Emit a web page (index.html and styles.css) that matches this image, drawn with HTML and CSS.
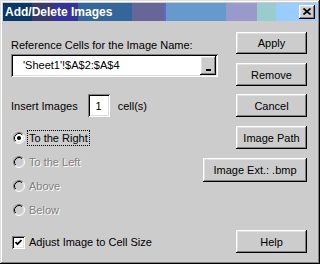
FILE: index.html
```html
<!DOCTYPE html>
<html lang="en">
<head>
    <meta charset="UTF-8">
    <title>Add/Delete Images</title>
    <link rel="stylesheet" href="styles.css">
</head>
<body>
    <div class="window">
        <div class="titlebar">
            <span class="title">Add/Delete Images</span>
            <button class="close-btn" aria-label="Close">
                <svg width="8" height="7" viewBox="0 0 8 7"><path d="M0.5 0.5 L7.5 6.5 M7.5 0.5 L0.5 6.5" stroke="#000" stroke-width="1.7"/></svg>
            </button>
        </div>

        <div class="content">
            <div class="left">
                <div class="label ref-label">Reference Cells for the Image Name:</div>
                <div class="field ref-field">
                    <span class="field-text">'Sheet1'!$A$2:$A$4</span>
                    <button class="pick-btn"><span class="pick-bar"></span></button>
                </div>

                <div class="insert-row">
                    <span>Insert Images</span>
                    <span class="field count-field">1</span>
                    <span>cell(s)</span>
                </div>

                <div class="radios">
                    <div class="radio-row">
                        <svg class="radio" width="12" height="12" viewBox="0 0 12 12">
                            <circle cx="6" cy="6" r="5" fill="#fff"/>
                            <path d="M2.11 9.89 A5.5 5.5 0 0 1 9.89 2.11" stroke="#808080" fill="none"/>
                            <path d="M9.89 2.11 A5.5 5.5 0 0 1 2.11 9.89" stroke="#fff" fill="none"/>
                            <path d="M2.82 9.18 A4.5 4.5 0 0 1 9.18 2.82" stroke="#000" fill="none"/>
                            <path d="M9.18 2.82 A4.5 4.5 0 0 1 2.82 9.18" stroke="#dfdfdf" fill="none"/>
                            <circle cx="6" cy="6" r="2" fill="#000"/>
                        </svg>
                        <span class="focus">To the Right</span>
                    </div>
                    <div class="radio-row disabled">
                        <svg class="radio" width="12" height="12" viewBox="0 0 12 12">
                            <circle cx="6" cy="6" r="5" fill="#ccc"/>
                            <path d="M2.11 9.89 A5.5 5.5 0 0 1 9.89 2.11" stroke="#808080" fill="none"/>
                            <path d="M9.89 2.11 A5.5 5.5 0 0 1 2.11 9.89" stroke="#fff" fill="none"/>
                            <path d="M2.82 9.18 A4.5 4.5 0 0 1 9.18 2.82" stroke="#000" fill="none"/>
                            <path d="M9.18 2.82 A4.5 4.5 0 0 1 2.82 9.18" stroke="#dfdfdf" fill="none"/>
                        </svg>
                        <span>To the Left</span>
                    </div>
                    <div class="radio-row disabled">
                        <svg class="radio" width="12" height="12" viewBox="0 0 12 12">
                            <circle cx="6" cy="6" r="5" fill="#ccc"/>
                            <path d="M2.11 9.89 A5.5 5.5 0 0 1 9.89 2.11" stroke="#808080" fill="none"/>
                            <path d="M9.89 2.11 A5.5 5.5 0 0 1 2.11 9.89" stroke="#fff" fill="none"/>
                            <path d="M2.82 9.18 A4.5 4.5 0 0 1 9.18 2.82" stroke="#000" fill="none"/>
                            <path d="M9.18 2.82 A4.5 4.5 0 0 1 2.82 9.18" stroke="#dfdfdf" fill="none"/>
                        </svg>
                        <span>Above</span>
                    </div>
                    <div class="radio-row disabled">
                        <svg class="radio" width="12" height="12" viewBox="0 0 12 12">
                            <circle cx="6" cy="6" r="5" fill="#ccc"/>
                            <path d="M2.11 9.89 A5.5 5.5 0 0 1 9.89 2.11" stroke="#808080" fill="none"/>
                            <path d="M9.89 2.11 A5.5 5.5 0 0 1 2.11 9.89" stroke="#fff" fill="none"/>
                            <path d="M2.82 9.18 A4.5 4.5 0 0 1 9.18 2.82" stroke="#000" fill="none"/>
                            <path d="M9.18 2.82 A4.5 4.5 0 0 1 2.82 9.18" stroke="#dfdfdf" fill="none"/>
                        </svg>
                        <span>Below</span>
                    </div>
                </div>

                <div class="check-row">
                    <span class="checkbox">
                        <svg width="7" height="7" viewBox="0 0 7 7"><path d="M0.5 3 L2.5 5.2 L6.5 1" stroke="#000" stroke-width="1.8" fill="none"/></svg>
                    </span>
                    <span>Adjust Image to Cell Size</span>
                </div>
            </div>

            <div class="right">
                <button class="btn btn-apply">Apply</button>
                <button class="btn btn-remove">Remove</button>
                <button class="btn btn-cancel">Cancel</button>
                <button class="btn btn-path">Image Path</button>
                <button class="btn btn-ext">Image Ext.: .bmp</button>
                <button class="btn btn-help">Help</button>
            </div>
        </div>
    </div>
</body>
</html>
```

FILE: styles.css
```css
:root {
    --face: #cccccc;
    --light: #dfdfdf;
    --shadow: #808080;
}

* {
    box-sizing: border-box;
    margin: 0;
    padding: 0;
}

body {
    font-family: 'Liberation Sans', Arial, sans-serif;
    font-size: 11px;
    color: #000;
    background: var(--face);
}

.window {
    width: 320px;
    height: 264px;
    padding: 3px;
    background: var(--face);
    box-shadow: inset -1px -1px #000, inset 1px 1px var(--light),
                inset -2px -2px var(--shadow), inset 2px 2px #fff;
    display: flex;
    flex-direction: column;
}

.titlebar {
    height: 18px;
    display: flex;
    align-items: center;
    justify-content: space-between;
    padding: 0 2px 0 2px;
    background: linear-gradient(to right,
        #0a3866 0 29px, #3a3a6a 29px 49px, #333399 49px 75px,
        #336699 75px 129px, #666699 129px 161px, #6666cc 161px 163px,
        #6699cc 163px 223px, #9999cc 223px 254px, #99cccc 254px 273px,
        #99ccff 273px);
}

.title {
    color: #fff;
    font-weight: bold;
    font-size: 12px;
    line-height: 18px;
}

button {
    font-family: inherit;
    font-size: 11px;
    color: #000;
    background: var(--face);
    border: none;
    box-shadow: inset -1px -1px #000, inset 1px 1px #fff,
                inset -2px -2px var(--shadow), inset 2px 2px var(--light);
}

.close-btn {
    width: 16px;
    height: 14px;
    display: flex;
    align-items: center;
    justify-content: center;
    padding-bottom: 1px;
}

.content {
    flex: 1;
    display: flex;
    gap: 18px;
    padding: 0 10px 0 8px;
}

.left {
    flex: none;
    width: 207px;
    display: flex;
    flex-direction: column;
}

.label {
    line-height: 13px;
    white-space: nowrap;
}

.ref-label {
    margin-top: 18px;
}

.field {
    background: #fff;
    box-shadow: inset 1px 1px var(--shadow), inset -1px -1px #fff,
                inset 2px 2px #000, inset -2px -2px var(--light);
}

.ref-field {
    margin-top: 2px;
    height: 23px;
    display: flex;
    align-items: center;
    justify-content: space-between;
    padding: 2px 2px 2px 12px;
}

.field-text {
    padding-bottom: 1px;
}

.pick-btn {
    width: 16px;
    height: 19px;
    display: flex;
    justify-content: center;
    align-items: flex-end;
    padding-bottom: 4px;
}

.pick-bar {
    width: 5px;
    height: 2px;
    background: #000;
}

.insert-row {
    margin-top: 17px;
    height: 23px;
    display: flex;
    align-items: center;
    gap: 10px;
}

.count-field {
    width: 22px;
    height: 23px;
    display: flex;
    align-items: center;
    justify-content: center;
    margin-right: -2px;
}

.radios {
    margin-top: 9px;
    display: flex;
    flex-direction: column;
}

.radio-row {
    height: 24px;
    display: flex;
    align-items: center;
    gap: 3px;
    padding-left: 2px;
}

.radio {
    flex: none;
}

.focus {
    outline: 1px dotted #000;
    outline-offset: 0;
    padding: 1px 1px 1px 1px;
    line-height: 12px;
}

.disabled span {
    color: var(--shadow);
    text-shadow: 1px 1px 0 #fff;
    padding-left: 1px;
}

.check-row {
    margin-top: 9px;
    height: 22px;
    display: flex;
    align-items: center;
    gap: 4px;
    padding-left: 1px;
}

.checkbox {
    width: 13px;
    height: 13px;
    display: flex;
    align-items: center;
    justify-content: center;
    background: #fff;
    box-shadow: inset 1px 1px var(--shadow), inset -1px -1px #fff,
                inset 2px 2px #000, inset -2px -2px var(--light);
}

.right {
    flex: none;
    width: 71px;
    display: flex;
    flex-direction: column;
    align-items: flex-end;
}

.btn {
    width: 71px;
    height: 23px;
}

.btn-apply { margin-top: 11px; height: 22px; }
.btn-remove { margin-top: 9px; }
.btn-cancel { margin-top: 8px; }
.btn-path { margin-top: 9px; }
.btn-ext { margin-top: 9px; width: 104px; height: 24px; margin-left: -33px; }
.btn-help { margin-top: 48px; }
```
